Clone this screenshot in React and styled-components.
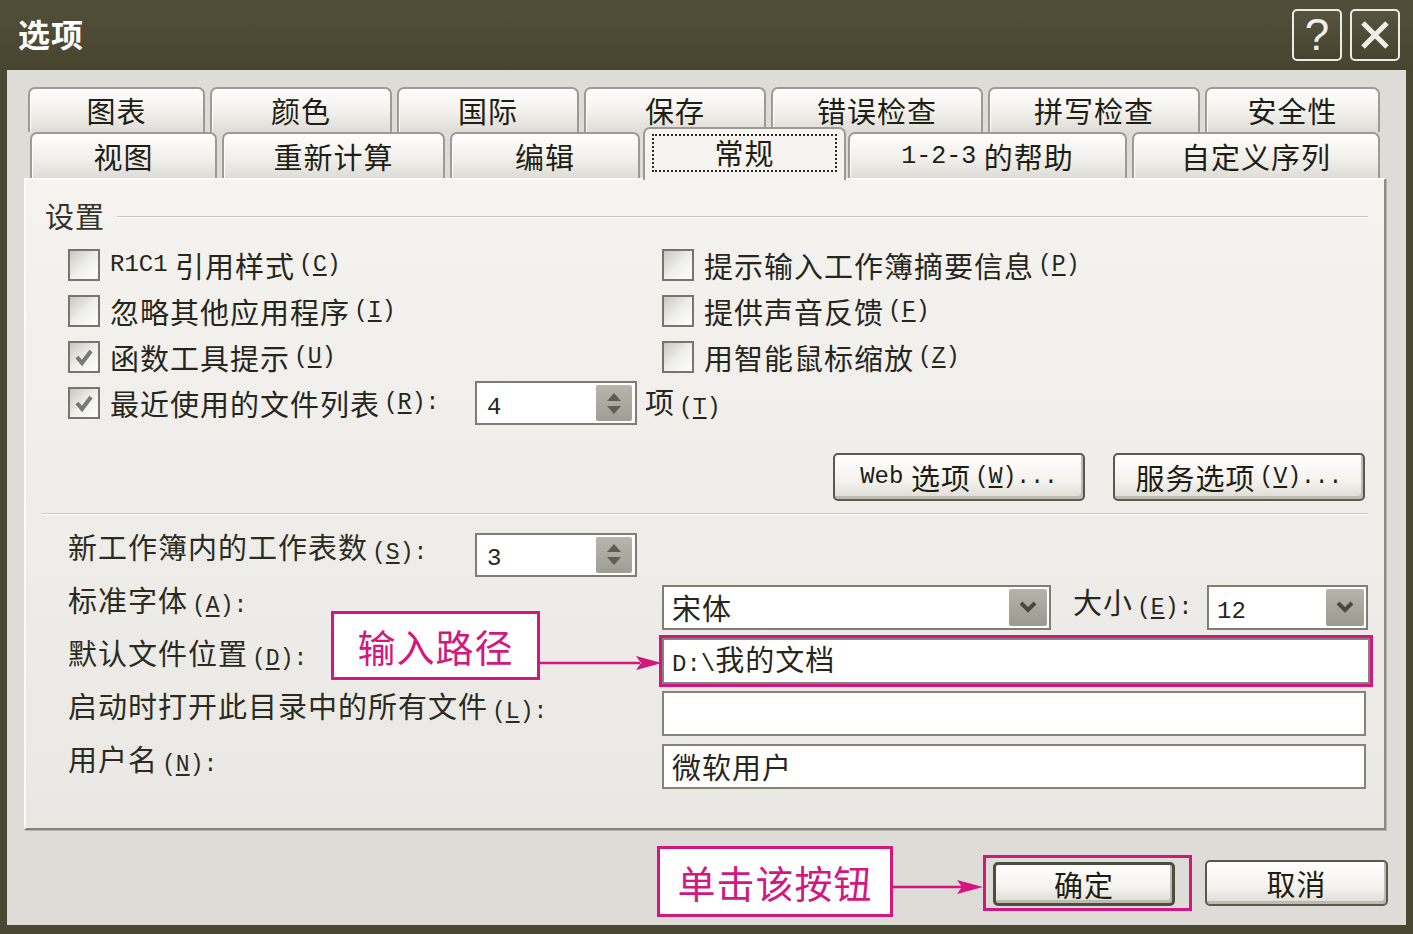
import React from "react";
import styled, { createGlobalStyle } from "styled-components";

const MAGENTA = "#d3177f";
const INK = "#27261c";

const GlobalStyle = createGlobalStyle`
  html, body {
    margin: 0;
    padding: 0;
    background: #4a4733;
  }
  body {
    font-family: "Noto Sans CJK SC", "Liberation Sans", sans-serif;
    color: ${INK};
  }
  * {
    box-sizing: border-box;
  }
`;

const Window = styled.div`
  width: 1413px;
  height: 934px;
  background: #4a4733;
  display: flex;
  flex-direction: column;
  overflow: hidden;
`;

const TitleBar = styled.div`
  height: 70px;
  flex: none;
  display: flex;
  align-items: center;
  padding: 0 13px 4px 18px;
  background: linear-gradient(#514e3a, #48452f);
`;

const Title = styled.div`
  flex: 1;
  color: #ffffff;
  font-size: 32px;
  font-weight: 700;
  letter-spacing: 1px;
  line-height: 1;
`;

const CaptionButton = styled.div`
  width: 50px;
  height: 52px;
  margin-left: 8px;
  margin-top: 4px;
  border: 2px solid #ecebe3;
  border-radius: 5px;
  background: linear-gradient(#57543f, #46432f);
  display: flex;
  align-items: center;
  justify-content: center;
  color: #f0f0ea;
  font-family: "Liberation Sans", sans-serif;
  font-size: 44px;
  line-height: 1;
`;

const Body = styled.div`
  flex: 1;
  margin: 0 7px 9px 7px;
  background: #dddcd6;
  padding: 17px 20px 0 17px;
  display: flex;
  flex-direction: column;
`;

const TabRow = styled.div`
  display: flex;
  gap: 5px;
  height: ${p => p.$h}px;
  margin-left: ${p => p.$indent}px;
`;

const Tab = styled.div`
  position: relative;
  width: ${p => p.$w}px;
  height: ${p => (p.$active ? 53 : p.$h)}px;
  margin: ${p => (p.$active ? "-5px -3px 0 -2px" : "0")};
  z-index: ${p => (p.$active ? 2 : 1)};
  border: 2px solid #9c9b92;
  border-bottom: none;
  border-radius: 7px 7px 0 0;
  background: ${p =>
    p.$active
      ? "linear-gradient(#f6f5f2, #f3f2ef)"
      : "linear-gradient(#fefefd, #f1f0ec 55%, #dedcd5)"};
  box-shadow: ${p => (p.$active ? "none" : "inset 1px 1px 0 #ffffff")};
  display: flex;
  align-items: center;
  justify-content: center;
  padding-bottom: ${p => (p.$active ? 4 : 0)}px;
  font-size: 29px;
  letter-spacing: 1px;
  line-height: 1;
  color: #1f1e15;
  white-space: nowrap;
`;

const FocusRing = styled.span`
  height: 38px;
  padding: 0 60px;
  border: 2px dotted #2a2a22;
  display: flex;
  align-items: center;
`;

const Panel = styled.div`
  height: 652px;
  flex: none;
  background: linear-gradient(#f4f3f0, #e9e8e4);
  border: 2px solid;
  border-color: #fbfbf9 #8d8c83 #85847a #fbfbf9;
  box-shadow: 1px 1px 0 #b5b4ac;
  padding: 17px 16px 0 19px;
  display: flex;
  flex-direction: column;
`;

const GroupHeader = styled.div`
  height: 36px;
  display: flex;
  align-items: center;
  font-size: 29px;
  letter-spacing: 1px;
  line-height: 1;
  color: #34332a;
`;

const GroupLine = styled.div`
  flex: 1;
  height: 2px;
  margin: 4px 0 0 12px;
  background: #c6c5be;
  border-bottom: 1px solid #ffffff;
`;

const CheckGrid = styled.div`
  display: grid;
  grid-template-columns: 594px 1fr;
  grid-auto-rows: 46px;
  margin: 9px 0 0 23px;
`;

const CheckRow = styled.div`
  display: flex;
  align-items: center;
`;

const CheckItem = styled.label`
  display: flex;
  align-items: center;
  flex: none;
  width: ${p => (p.$w ? `${p.$w}px` : "auto")};
  white-space: nowrap;
  font-size: 29px;
  letter-spacing: 1px;
  line-height: 1;
`;

const Box = styled.span`
  width: 32px;
  height: 32px;
  flex: none;
  margin-right: 10px;
  border: 2px solid #77766c;
  background: linear-gradient(135deg, #c9c8c0 0%, #eeeeea 50%, #ffffff 100%);
  display: flex;
  align-items: center;
  justify-content: center;
`;

const Lat = styled.span`
  font-family: "Liberation Mono", "DejaVu Sans Mono", monospace;
  font-size: ${p => p.$size || 24}px;
  letter-spacing: 0;
`;

const KeyHint = styled.span`
  font-family: "Liberation Mono", "DejaVu Sans Mono", monospace;
  font-size: 23px;
  letter-spacing: 0;
  margin-left: 4px;
  white-space: nowrap;
`;

const Under = styled.span`
  text-decoration: underline;
  text-decoration-thickness: 2px;
  text-underline-offset: 3px;
`;

const AfterText = styled.span`
  flex: none;
  margin-left: 8px;
  white-space: nowrap;
  font-size: 29px;
  letter-spacing: 1px;
  line-height: 1;
`;

const SpinBox = styled.div`
  width: 162px;
  height: 44px;
  flex: none;
  border: 2px solid #7f7e75;
  background: #ffffff;
  display: flex;
  align-items: center;
  padding: 0 3px 0 10px;
`;

const FieldValue = styled.span`
  flex: 1;
  white-space: nowrap;
  font-size: 29px;
  letter-spacing: 1px;
  line-height: 1;
`;

const SpinButton = styled.div`
  width: 36px;
  height: 36px;
  border-radius: 2px;
  background: linear-gradient(#b7b6ad, #9f9e95);
  display: flex;
  flex-direction: column;
  align-items: center;
  justify-content: center;
  gap: 5px;
`;

const ButtonRow = styled.div`
  display: flex;
  justify-content: flex-end;
  gap: 28px;
  margin: 27px 3px 0 0;
`;

const PushButton = styled.div`
  width: ${p => p.$w}px;
  height: ${p => p.$h}px;
  flex: none;
  border: ${p => (p.$default ? "3px solid #4e4d42" : "2px solid #5a594e")};
  border-radius: 5px;
  background: linear-gradient(#ffffff, #f3f2ee 60%, #dcdbd3);
  box-shadow: inset -2px -3px 0 #bdbcb3;
  display: flex;
  align-items: center;
  justify-content: center;
  white-space: nowrap;
  font-size: 29px;
  letter-spacing: 1px;
  line-height: 1;
  color: #1e1d14;
`;

const Separator = styled.div`
  height: 2px;
  margin: 12px 0 0 -3px;
  background: #c9c8c1;
  border-bottom: 1px solid #ffffff;
`;

const Form = styled.div`
  display: flex;
  flex-direction: column;
  margin: 13px 0 0 23px;
`;

const FormRow = styled.div`
  position: relative;
  height: 53px;
  display: grid;
  grid-template-columns: 594px 1fr;
  align-items: center;
`;

const LabelCell = styled.div`
  display: flex;
  align-items: center;
`;

const Label = styled.span`
  flex: none;
  width: ${p => (p.$w ? `${p.$w}px` : "auto")};
  margin-bottom: ${p => (p.$lift ? 13 : 0)}px;
  white-space: nowrap;
  font-size: 29px;
  letter-spacing: 1px;
  line-height: 1;
  color: #2c2b21;
`;

const FieldCell = styled.div`
  display: flex;
  align-items: center;
`;

const Combo = styled.div`
  width: ${p => p.$w}px;
  height: 45px;
  flex: none;
  margin-left: ${p => (p.$push ? "auto" : "0")};
  border: 2px solid #7f7e75;
  background: #ffffff;
  display: flex;
  align-items: center;
  padding: 0 2px 0 8px;
`;

const DropButton = styled.div`
  width: 38px;
  height: 37px;
  border-radius: 2px;
  background: linear-gradient(#b5b4ab, #9b9a90);
  display: flex;
  align-items: center;
  justify-content: center;
`;

const InlineLabel = styled.span`
  margin: 0 10px 8px 22px;
  white-space: nowrap;
  font-size: 29px;
  letter-spacing: 1px;
  line-height: 1;
`;

const TextField = styled.div`
  width: ${p => p.$w || 704}px;
  height: ${p => p.$h || 45}px;
  border: 2px solid #85847b;
  background: #ffffff;
  display: flex;
  align-items: center;
  padding-left: 8px;
`;

const HighlightFrame = styled.div`
  border: 3px solid ${MAGENTA};
  margin-left: -3px;
  display: flex;
`;

const Callout = styled.div`
  width: ${p => p.$w}px;
  height: ${p => p.$h}px;
  flex: none;
  border: 3px solid ${MAGENTA};
  background: #ffffff;
  display: flex;
  align-items: center;
  justify-content: center;
  color: ${MAGENTA};
  font-size: 38px;
  letter-spacing: 1px;
  line-height: 1;
  white-space: nowrap;
`;

const FloatingCallout = styled(Callout)`
  position: absolute;
  left: 263px;
  top: -23px;
  z-index: 3;
`;

const FloatingArrow = styled.svg`
  position: absolute;
  left: 472px;
  top: 21px;
  z-index: 3;
`;

const Footer = styled.div`
  flex: 1;
  display: flex;
  justify-content: flex-end;
  align-items: flex-start;
  margin-right: -2px;
`;

const FooterCallout = styled(Callout)`
  margin-top: 16px;
`;

const FooterArrow = styled.svg`
  flex: none;
  margin-top: 16px;
`;

const DefaultFrame = styled.div`
  width: 209px;
  height: 56px;
  margin-top: 25px;
  border: 3px solid ${MAGENTA};
  padding: 4px 0 0 7px;
`;

const CancelSlot = styled.div`
  margin: 30px 0 0 13px;
`;

const Key = ({ k, colon, dots }) => (
  <KeyHint>
    (<Under>{k}</Under>){colon ? ":" : ""}
    {dots ? "..." : ""}
  </KeyHint>
);

const Check = () => (
  <svg width="20" height="20" viewBox="0 0 20 20">
    <path d="M3 10 L8 16 L17 4" fill="none" stroke="#7a7970" strokeWidth="4" strokeLinejoin="miter" />
  </svg>
);

const CheckBox = ({ checked }) => <Box>{checked && <Check />}</Box>;

const Spin = ({ value }) => (
  <SpinBox>
    <FieldValue>
      <Lat>{value}</Lat>
    </FieldValue>
    <SpinButton>
      <svg width="14" height="8" viewBox="0 0 14 8">
        <path d="M7 0 L14 8 L0 8 Z" fill="#5f5e55" />
      </svg>
      <svg width="14" height="8" viewBox="0 0 14 8">
        <path d="M0 0 L14 0 L7 8 Z" fill="#5f5e55" />
      </svg>
    </SpinButton>
  </SpinBox>
);

const Drop = () => (
  <DropButton>
    <svg width="18" height="14" viewBox="0 0 18 14">
      <path d="M2 2 L9 9 L16 2" fill="none" stroke="#4a493f" strokeWidth="4" />
    </svg>
  </DropButton>
);

const topTabs = [
  ["图表", 177],
  ["颜色", 182],
  ["国际", 182],
  ["保存", 182],
  ["错误检查", 212],
  ["拼写检查", 212],
  ["安全性", 175],
];

const bottomTabs = [
  ["视图", 187],
  ["重新计算", 223],
  ["编辑", 190],
  ["常规", 203, true],
  [
    <>
      <Lat $size={25}>1-2-3</Lat>&nbsp;的帮助
    </>,
    279,
  ],
  ["自定义序列", 248],
];

export default function App() {
  return (
    <Window>
      <GlobalStyle />
      <TitleBar>
        <Title>选项</Title>
        <CaptionButton>?</CaptionButton>
        <CaptionButton>
          <svg width="32" height="32" viewBox="0 0 32 32">
            <path d="M4 4 L28 28 M28 4 L4 28" stroke="#f0f0ea" strokeWidth="5" />
          </svg>
        </CaptionButton>
      </TitleBar>

      <Body>
        <TabRow $h={45} $indent={4}>
          {topTabs.map(([label, w]) => (
            <Tab key={label} $w={w} $h={45}>
              {label}
            </Tab>
          ))}
        </TabRow>
        <TabRow $h={46} $indent={6}>
          {bottomTabs.map(([label, w, active], i) => (
            <Tab key={i} $w={w} $h={46} $active={active}>
              {active ? <FocusRing>{label}</FocusRing> : label}
            </Tab>
          ))}
        </TabRow>

        <Panel>
          <GroupHeader>
            设置
            <GroupLine />
          </GroupHeader>

          <CheckGrid>
            <CheckRow>
              <CheckItem>
                <CheckBox />
                <Lat>R1C1</Lat>&nbsp;引用样式
                <Key k="C" />
              </CheckItem>
            </CheckRow>
            <CheckRow>
              <CheckItem>
                <CheckBox />
                提示输入工作簿摘要信息
                <Key k="P" />
              </CheckItem>
            </CheckRow>
            <CheckRow>
              <CheckItem>
                <CheckBox />
                忽略其他应用程序
                <Key k="I" />
              </CheckItem>
            </CheckRow>
            <CheckRow>
              <CheckItem>
                <CheckBox />
                提供声音反馈
                <Key k="F" />
              </CheckItem>
            </CheckRow>
            <CheckRow>
              <CheckItem>
                <CheckBox checked />
                函数工具提示
                <Key k="U" />
              </CheckItem>
            </CheckRow>
            <CheckRow>
              <CheckItem>
                <CheckBox />
                用智能鼠标缩放
                <Key k="Z" />
              </CheckItem>
            </CheckRow>
            <CheckRow>
              <CheckItem $w={407}>
                <CheckBox checked />
                最近使用的文件列表
                <Key k="R" colon />
              </CheckItem>
              <Spin value="4" />
              <AfterText>
                项<Key k="T" />
              </AfterText>
            </CheckRow>
          </CheckGrid>

          <ButtonRow>
            <PushButton $w={252} $h={48}>
              <Lat>Web</Lat>&nbsp;选项
              <Key k="W" dots />
            </PushButton>
            <PushButton $w={252} $h={48}>
              服务选项
              <Key k="V" dots />
            </PushButton>
          </ButtonRow>

          <Separator />

          <Form>
            <FormRow>
              <LabelCell>
                <Label $w={407} $lift>
                  新工作簿内的工作表数
                  <Key k="S" colon />
                </Label>
                <Spin value="3" />
              </LabelCell>
            </FormRow>

            <FormRow>
              <Label $lift>
                标准字体
                <Key k="A" colon />
              </Label>
              <FieldCell>
                <Combo $w={389}>
                  <FieldValue>宋体</FieldValue>
                  <Drop />
                </Combo>
                <InlineLabel>
                  大小
                  <Key k="E" colon />
                </InlineLabel>
                <Combo $w={161} $push>
                  <FieldValue>
                    <Lat>12</Lat>
                  </FieldValue>
                  <Drop />
                </Combo>
              </FieldCell>
            </FormRow>

            <FormRow>
              <Label $lift>
                默认文件位置
                <Key k="D" colon />
              </Label>
              <FieldCell>
                <HighlightFrame>
                  <TextField $w={708} $h={46}>
                    <FieldValue>
                      <Lat>D:\</Lat>我的文档
                    </FieldValue>
                  </TextField>
                </HighlightFrame>
              </FieldCell>
              <FloatingCallout $w={209} $h={69}>输入路径</FloatingCallout>
              <FloatingArrow width="122" height="16" viewBox="0 0 122 16">
                <line x1="0" y1="8" x2="100" y2="8" stroke={MAGENTA} strokeWidth="2.5" />
                <path d="M96 1 L122 8 L96 15 L101 8 Z" fill={MAGENTA} />
              </FloatingArrow>
            </FormRow>

            <FormRow>
              <Label $lift>
                启动时打开此目录中的所有文件
                <Key k="L" colon />
              </Label>
              <FieldCell>
                <TextField />
              </FieldCell>
            </FormRow>

            <FormRow>
              <Label $lift>
                用户名
                <Key k="N" colon />
              </Label>
              <FieldCell>
                <TextField>
                  <FieldValue>微软用户</FieldValue>
                </TextField>
              </FieldCell>
            </FormRow>
          </Form>
        </Panel>

        <Footer>
          <FooterCallout $w={236} $h={71}>单击该按钮</FooterCallout>
          <FooterArrow width="90" height="71" viewBox="0 0 90 71">
            <line x1="0" y1="41" x2="70" y2="41" stroke={MAGENTA} strokeWidth="2.5" />
            <path d="M64 34 L90 41 L64 48 L69 41 Z" fill={MAGENTA} />
          </FooterArrow>
          <DefaultFrame>
            <PushButton $w={182} $h={44} $default>
              确定
            </PushButton>
          </DefaultFrame>
          <CancelSlot>
            <PushButton $w={183} $h={46}>
              取消
            </PushButton>
          </CancelSlot>
        </Footer>
      </Body>
    </Window>
  );
}
